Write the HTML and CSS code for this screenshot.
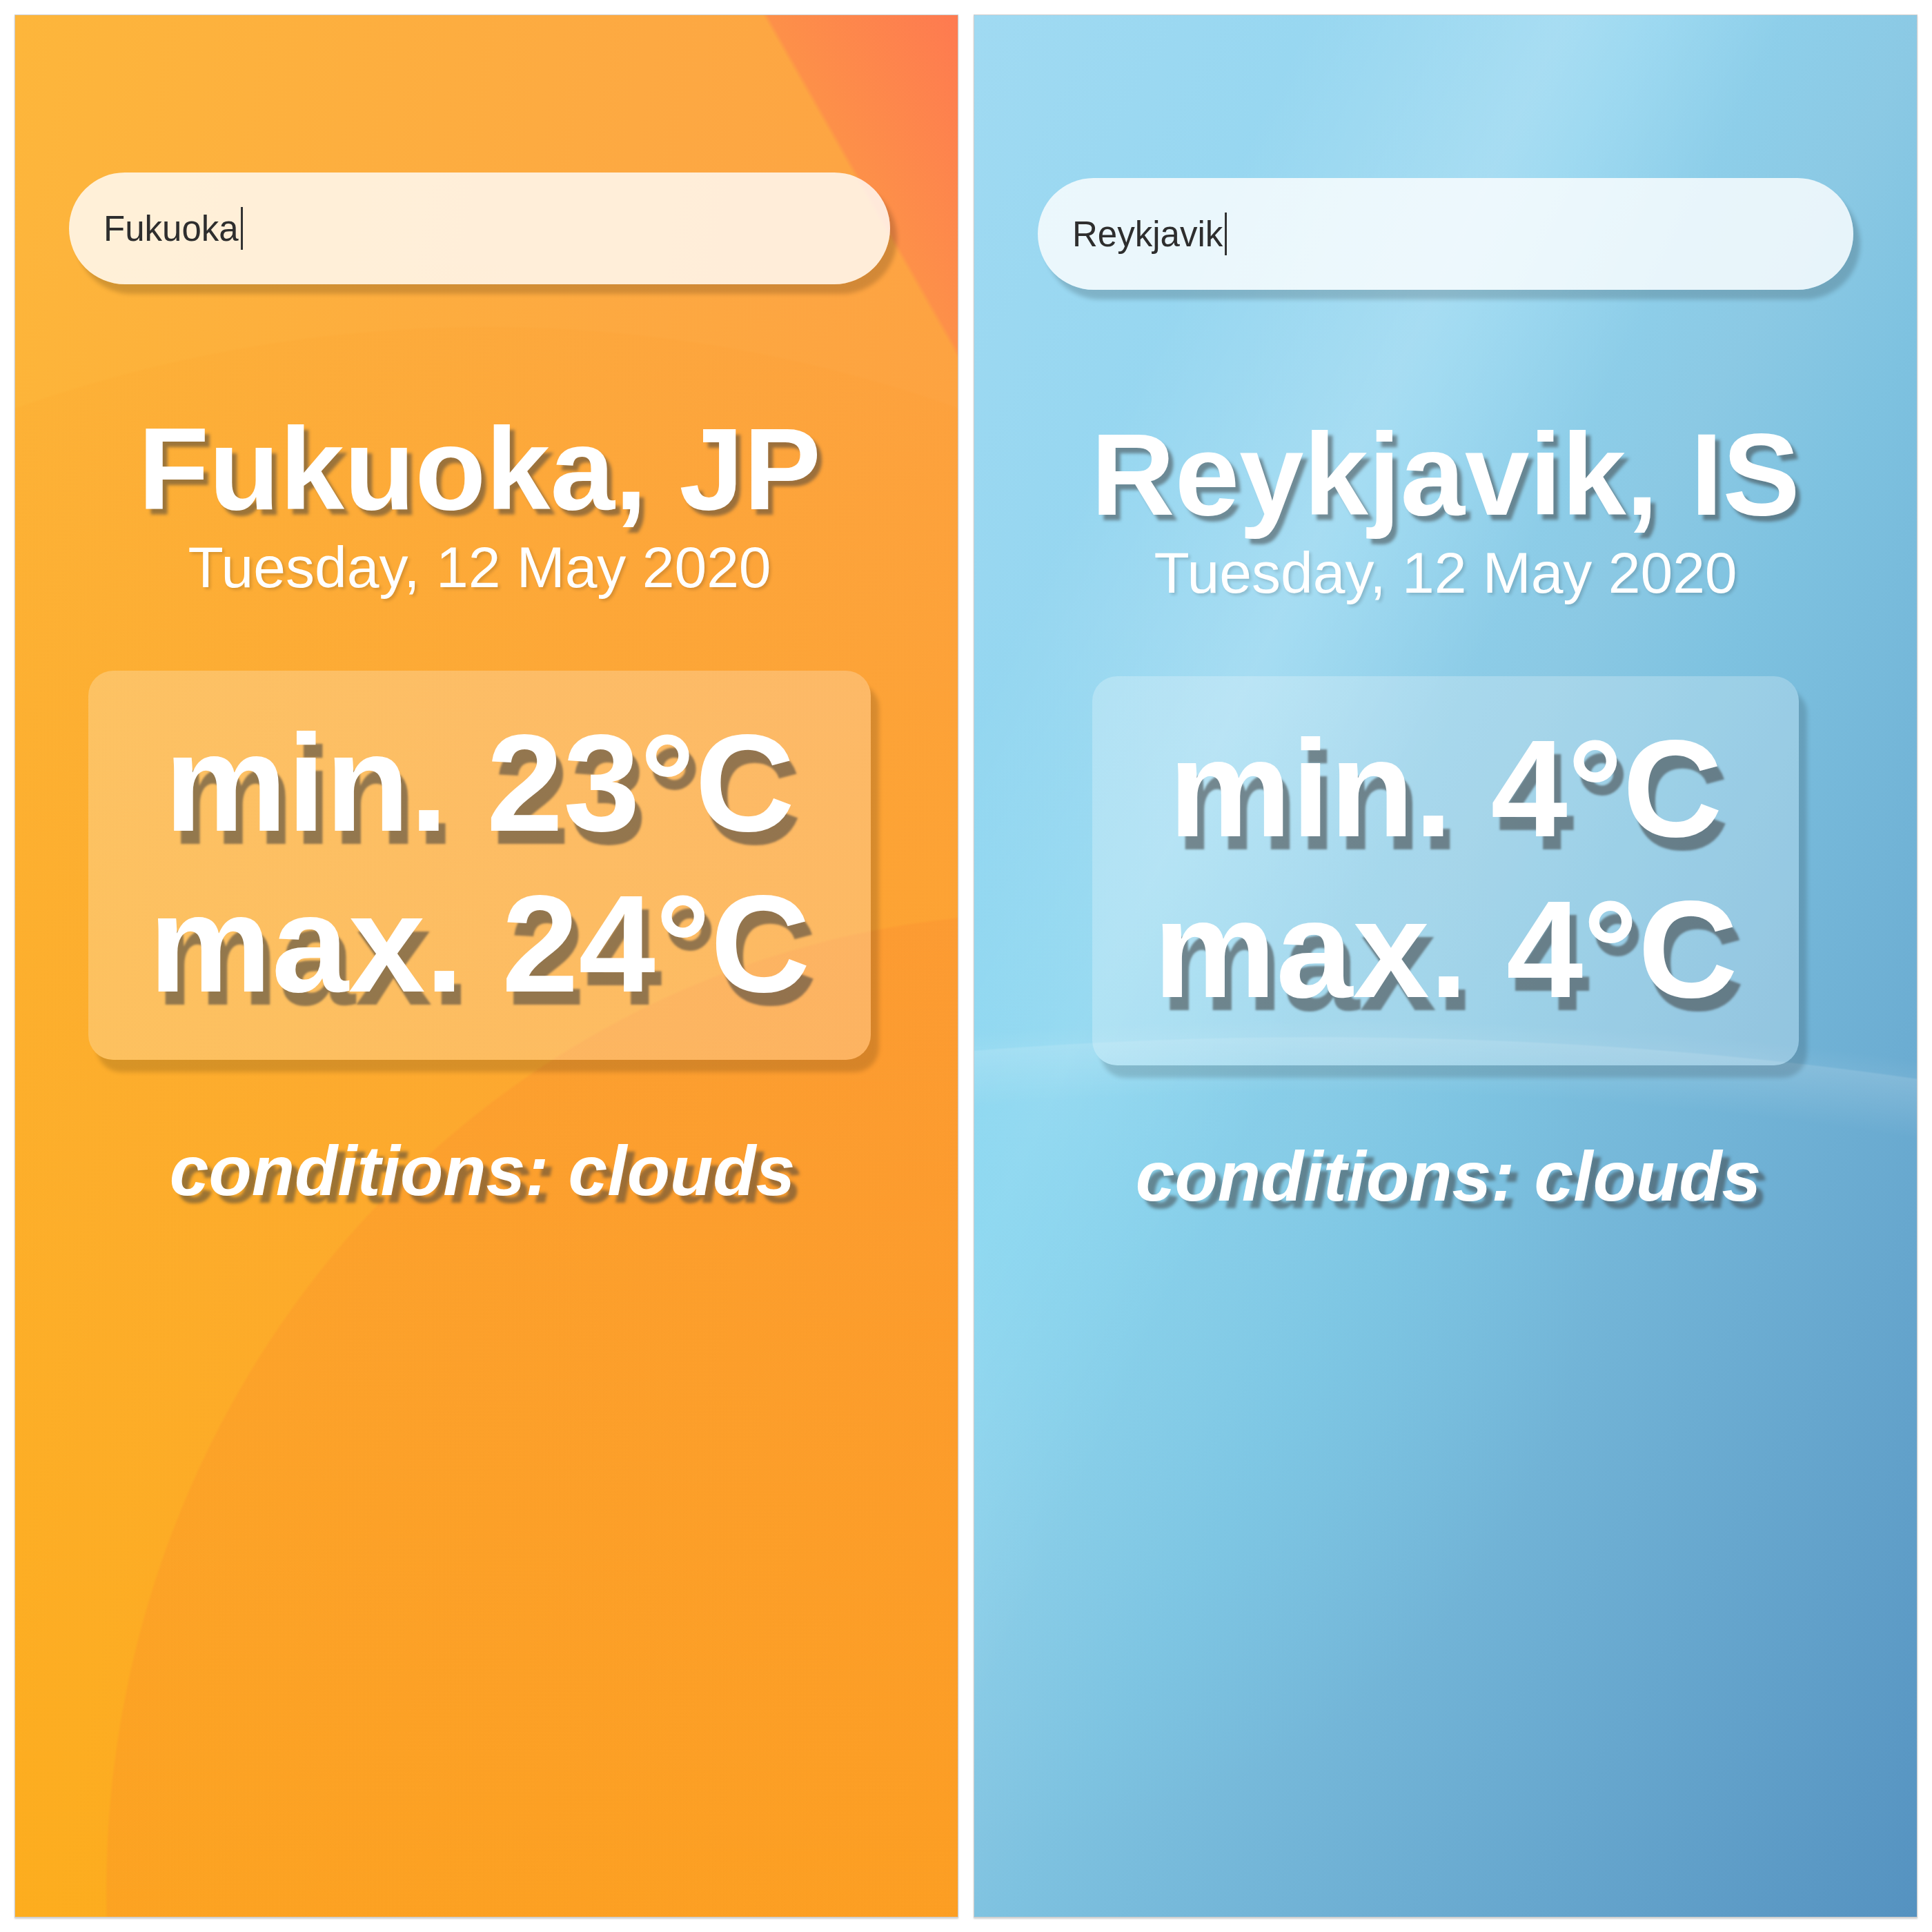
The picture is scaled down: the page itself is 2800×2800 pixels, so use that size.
FILE: index.html
```html
<!DOCTYPE html>
<html lang="en">
<head>
<meta charset="utf-8">
<title>Weather</title>
<link rel="stylesheet" href="styles.css">
</head>
<body>
<main class="screens">
  <section class="phone phone--warm">
    <div class="search"><span class="query">Fukuoka</span><span class="caret"></span></div>
    <h1 class="city">Fukuoka, JP</h1>
    <p class="date">Tuesday, 12 May 2020</p>
    <div class="temps">
      <div class="temp">min. 23°C</div>
      <div class="temp">max. 24°C</div>
    </div>
    <p class="conditions">conditions: clouds</p>
  </section>
  <section class="phone phone--cool">
    <div class="search"><span class="query">Reykjavik</span><span class="caret"></span></div>
    <h1 class="city">Reykjavik, IS</h1>
    <p class="date">Tuesday, 12 May 2020</p>
    <div class="temps">
      <div class="temp">min. 4°C</div>
      <div class="temp">max. 4°C</div>
    </div>
    <p class="conditions">conditions: clouds</p>
  </section>
</main>
</body>
</html>
```
FILE: styles.css
```css
html, body {
  margin: 0;
  background: #ffffff;
}

.screens {
  box-sizing: border-box;
  width: 2800px;
  height: 2800px;
  padding: 21px;
  display: flex;
  gap: 22px;
}

.phone {
  box-sizing: border-box;
  flex: 0 0 1368px;
  height: 2758px;
  border: 1px solid #cdcdcd;
  box-shadow: 0 2px 2px rgba(0, 0, 0, 0.18);
  display: flex;
  flex-direction: column;
  align-items: center;
  font-family: "Liberation Sans", Arial, Helvetica, sans-serif;
  color: #ffffff;
  overflow: hidden;
}

.phone--warm {
  padding: 228px 98px 0 78px;
  background:
    linear-gradient(60.4deg, rgba(253, 145, 72, 0) 2303px, #fd9049 2310px, #fe7a50 100%),
    radial-gradient(1366px 1420px at 1496px 2720px, rgba(250, 125, 45, 0.2) 99.7%, rgba(250, 125, 45, 0) 100%),
    radial-gradient(2000px 1950px at 684px 2400px, rgba(250, 140, 20, 0.07) 99.8%, rgba(250, 140, 20, 0) 100%),
    linear-gradient(to bottom, rgba(253, 176, 10, 0) 12%, rgba(253, 176, 10, 0.6) 100%),
    linear-gradient(100deg, #fdb63b 0%, #fda942 50%, #fd9d45 100%);
}

.phone--cool {
  padding: 236px 92px 0 92px;
  background:
    radial-gradient(2300px 820px at 500px 2300px, rgba(255, 255, 255, 0) 90%, rgba(255, 255, 255, 0.16) 99.7%, rgba(255, 255, 255, 0.05) 100%, rgba(255, 255, 255, 0) 103%),
    radial-gradient(900px 900px at 0 1750px, rgba(125, 214, 240, 0.55) 0%, rgba(125, 214, 240, 0) 100%),
    linear-gradient(115.6deg, rgba(255, 255, 255, 0) 18%, rgba(255, 255, 255, 0.2) 32%, rgba(255, 255, 255, 0) 44%),
    linear-gradient(120deg, #a0daf2 0%, #90d4ef 33%, #8bc9e4 47%, #7ec2e0 55%, #5592c0 100%);
}

.search {
  box-sizing: border-box;
  align-self: stretch;
  height: 162px;
  border-radius: 81px;
  background: rgba(255, 255, 255, 0.8);
  box-shadow: 10px 14px 6px rgba(0, 0, 0, 0.17);
  display: flex;
  align-items: center;
  padding-left: 50px;
  font-size: 51px;
  color: #2e2e2e;
}

.caret {
  display: inline-block;
  width: 3px;
  height: 62px;
  margin-left: 3px;
  background: #333333;
}

.city {
  margin: 184px 0 0;
  font-size: 168px;
  line-height: 168px;
  font-weight: 700;
  text-shadow: 7px 8px 4px rgba(60, 60, 60, 0.5);
}

.date {
  margin: 16px 0 0;
  font-size: 84px;
  line-height: 84px;
  text-shadow: 3px 3px 4px rgba(0, 0, 0, 0.15);
}

.temps {
  margin-top: 108px;
  padding: 46px 88px 52px;
  border-radius: 36px;
  background: rgba(255, 255, 255, 0.24);
  box-shadow: 12px 18px 6px rgba(0, 0, 0, 0.15);
  text-align: center;
}

.temp {
  font-size: 200px;
  line-height: 233px;
  font-weight: 700;
  text-shadow: 10px 19px 3px rgba(60, 60, 60, 0.55);
}

.conditions {
  margin: 110px 0 0;
  padding-left: 8px;
  font-size: 102px;
  line-height: 102px;
  font-weight: 700;
  font-style: italic;
  text-shadow: 10px 11px 4px rgba(60, 60, 60, 0.5);
}
```
